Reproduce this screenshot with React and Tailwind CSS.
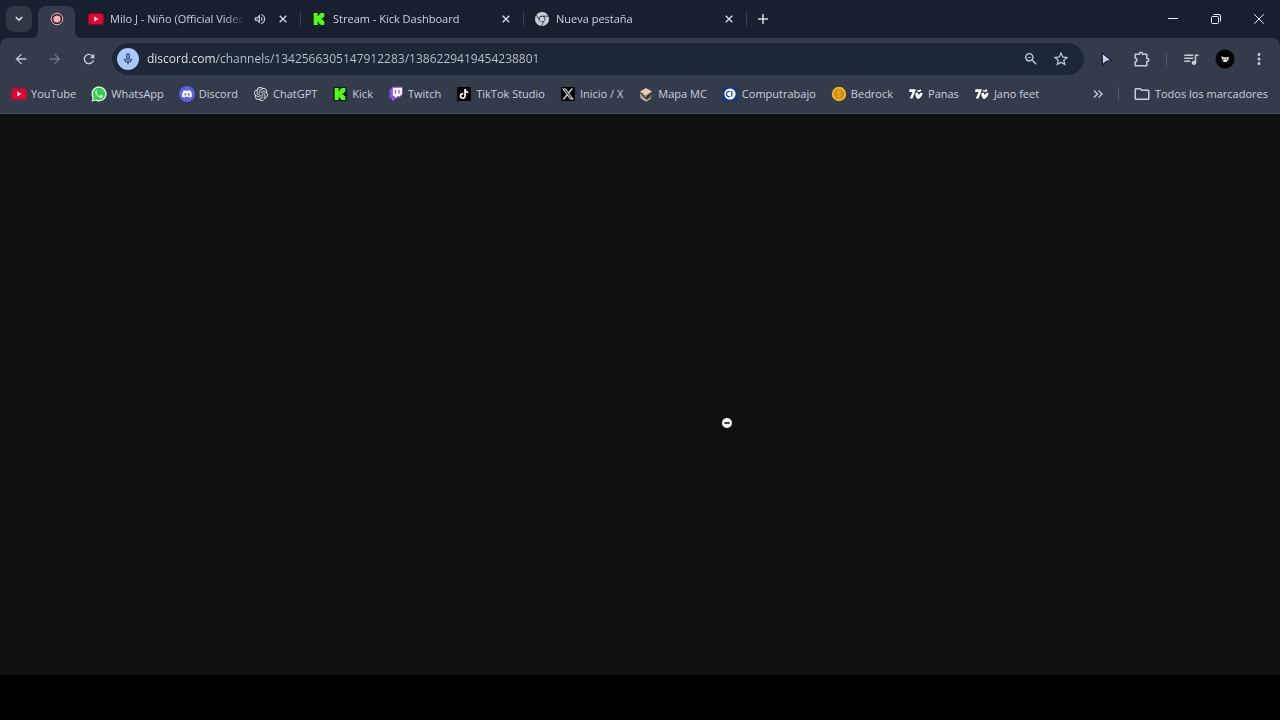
import React, { useState } from 'react';
import {
  MdArrowBack,
  MdArrowForward,
  MdRefresh,
  MdOutlineMicNone,
  MdOutlineZoomOut,
  MdStarBorder,
  MdQueueMusic,
  MdMoreVert,
  MdOutlineVolumeUp,
  MdOutlineFolder,
} from 'react-icons/md';
import { SiDiscord, SiGooglechrome, SiKick, SiOpenai, SiTiktok, SiX } from 'react-icons/si';

const YouTubeIcon = () => (
  <svg viewBox="0 0 16 16" className="size-4">
    <rect x="0.5" y="2.5" width="15" height="11" rx="2.6" fill="#e8002f" />
    <path d="M6.3 5.6v4.8L10.4 8z" fill="#fff" />
  </svg>
);

const WhatsAppIcon = () => (
  <svg viewBox="0 0 16 16" className="size-4">
    <path d="M0.6 15.6l1-3.9A7.5 7.5 0 1 1 4.5 14.5z" fill="#fff" />
    <path d="M2 14.2l.8-2.8A6.3 6.3 0 1 1 4.9 13.4z" fill="#2bd34f" />
    <path
      d="M5.6 4.3c-.3 0-.6.1-.8.4-.9 1-.7 2.3.2 3.6 1.1 1.6 2.4 2.7 4.2 3.3 1.1.3 2-.1 2.4-.9.2-.5.2-.9.1-1l-1.900-.9c-.2-.1-.4 0-.5.1l-.7.9c-.1.1-.3.2-.5.1-1.1-.5-1.900-1.200-2.500-2.200-.1-.2 0-.3.1-.4l.5-.7c.1-.1.1-.3 0-.4l-.7-1.700c-.1-.2-.2-.2-.4-.2z"
      fill="#fff"
    />
  </svg>
);

const DiscordIcon = () => (
  <span className="flex size-4 items-center justify-center rounded-full bg-[#5a60e0] text-white">
    <SiDiscord className="size-[10px]" />
  </span>
);

const KickIcon = () => (
  <span className="flex size-[14px] items-center justify-center rounded-xs bg-[#06200a] text-[#53fc18]">
    <SiKick className="size-3" />
  </span>
);

const TwitchIcon = () => (
  <svg viewBox="0 0 16 16" className="size-4">
    <path d="M4.500 1.500h9.500v6.700l-2.500 2.300H9L7 12.500v-2H4.500z" fill="#fff" />
    <path d="M7.500 4v3.500M11 4v3.500" stroke="#9146ff" strokeWidth="1.300" />
    <path d="M1.500 4L4.500 1v9.500H7V12.500L5 15H4v-2.500H1.500z" fill="#9146ff" />
    <path d="M4.500 1h10v7.500L11 12H8.500L6.500 13.500" fill="none" stroke="#9146ff" strokeWidth="0.800" />
  </svg>
);

const TikTokIcon = () => (
  <span className="flex size-[14px] items-center justify-center bg-black text-white">
    <SiTiktok className="size-[10px]" />
  </span>
);

const XIcon = () => (
  <span className="flex size-[14px] items-center justify-center bg-black text-[#d5d5d5]">
    <SiX className="size-3" />
  </span>
);

const MapIcon = () => (
  <svg viewBox="0 0 16 16" className="size-4">
    <path d="M2 5.500L8 9v6L2 11.500z" fill="#a29a8c" />
    <path d="M14 5.500L8 9v6l6-3.500z" fill="#5e574c" />
    <path d="M2 5.500L8 2l6 3.500L8 9.500z" fill="#f0cbb0" />
    <path d="M2 6.500l2 1.200v1l2 1V11l2 1.200 2-1V10l2-1.200V7.700l2-1.200" fill="none" stroke="#25231f" />
    <path d="M3 12l5 3 5-3" fill="none" stroke="#d8d6d0" />
  </svg>
);

const ComputrabajoIcon = () => (
  <svg viewBox="0 0 16 16" className="size-4">
    <rect x="1" y="1" width="14" height="14" rx="1" fill="#0b3a8f" />
    <circle cx="8" cy="8" r="5.600" fill="#fff" />
    <path d="M8.200 5.500a2.700 2.700 0 1 0 0 5M9.800 5v5.500" fill="none" stroke="#1b4a9c" strokeWidth="1.300" />
  </svg>
);

const BedrockIcon = () => (
  <svg viewBox="0 0 16 16" className="size-4">
    <circle cx="8" cy="8" r="7.200" fill="#f0b62c" />
    <circle cx="8" cy="8" r="5.200" fill="#cf8d08" />
    <path
      d="M10 6.200C9.500 5.300 6.200 5 6.200 6.700c0 1.600 3.700.9 3.700 2.600 0 1.700-3.400 1.500-3.900.4M8 4.200v7.600"
      fill="none"
      stroke="#f0b62c"
      strokeWidth="0.800"
    />
  </svg>
);

const SevenTvIcon = () => (
  <svg viewBox="0 0 16 16" className="size-4">
    <path d="M1.500 3.200h6.200L7.200 5.600 4.500 12.500H1.800L4.600 6H1z" fill="#fff" />
    <path d="M7.700 6.800h2l.9 2.200 2-2.300 1.900.3c.1 1.500-.7 3-1.800 4.100L11.200 12.800H9L7.300 9z" fill="#fff" />
    <path d="M8.700 3.700l1.800.9 2-1.300 1 1.400-2.200 1.300-1.900-.4z" fill="#fff" />
  </svg>
);

const ChatGptIcon = () => <SiOpenai className="size-[14px] text-[#d5d9e0]" />;
const ChromeIcon = () => <SiGooglechrome className="size-[14px] text-[#c8ccd4]" />;

const CrossIcon = () => (
  <svg viewBox="0 0 8 8" className="size-2">
    <path d="M0.700 0.700l6.600 6.600M7.300 0.700L0.700 7.300" stroke="currentColor" strokeWidth="1.400" />
  </svg>
);

const tabs = [
  { title: 'Milo J - Niño (Official Video)', Icon: YouTubeIcon, audio: true },
  { title: 'Stream - Kick Dashboard', Icon: KickIcon },
  { title: 'Nueva pestaña', Icon: ChromeIcon },
];

const bookmarks = [
  { name: 'YouTube', Icon: YouTubeIcon },
  { name: 'WhatsApp', Icon: WhatsAppIcon },
  { name: 'Discord', Icon: DiscordIcon },
  { name: 'ChatGPT', Icon: ChatGptIcon },
  { name: 'Kick', Icon: KickIcon },
  { name: 'Twitch', Icon: TwitchIcon },
  { name: 'TikTok Studio', Icon: TikTokIcon },
  { name: 'Inicio / X', Icon: XIcon },
  { name: 'Mapa MC', Icon: MapIcon },
  { name: 'Computrabajo', Icon: ComputrabajoIcon },
  { name: 'Bedrock', Icon: BedrockIcon },
  { name: 'Panas', Icon: SevenTvIcon },
  { name: 'Jano feet', Icon: SevenTvIcon },
];

const Tab = ({ title, Icon, audio }) => (
  <div className="flex h-full w-[223px] min-w-0 items-center pl-[10px]">
    <span className="flex size-4 shrink-0 items-center justify-center">
      <Icon />
    </span>
    <span className="ml-[6px] min-w-0 flex-1 overflow-hidden whitespace-nowrap text-[11px] leading-4 text-[#ccd2dc] [mask-image:linear-gradient(to_right,black_85%,transparent)]">
      {title}
    </span>
    {audio && <MdOutlineVolumeUp className="ml-2 size-[14px] shrink-0 text-[#c3c9d3]" />}
    <button aria-label="Cerrar pestaña" className="ml-1 flex size-6 shrink-0 items-center justify-center text-[#d3d7df]">
      <CrossIcon />
    </button>
    <span className="ml-[5px] h-[14px] w-px shrink-0 bg-[#394252]"></span>
  </div>
);

const TabStrip = () => (
  <div className="flex h-[38px] items-center">
    <button
      aria-label="Buscar pestañas"
      className="ml-[6px] flex size-[26px] shrink-0 items-center justify-center rounded-lg bg-[#303846] text-[#e3e6eb]"
    >
      <svg viewBox="0 0 8 6" className="h-[6px] w-2">
        <path d="M0.800 1l3.200 3.200L7.200 1" fill="none" stroke="currentColor" strokeWidth="1.500" />
      </svg>
    </button>

    {/* Active tab with its flared feet */}
    <div className="flex h-full shrink-0 items-end text-[#343c4b]">
      <svg viewBox="0 0 6 6" className="size-[6px]">
        <path d="M6 0v6H0a6 6 0 0 0 6-6z" fill="currentColor" />
      </svg>
      <div className="flex h-8 w-[37px] items-center justify-center rounded-t-lg bg-[#343c4b] pb-[6px]">
        <svg viewBox="0 0 14 14" className="size-[14px]">
          <circle cx="7" cy="7" r="5.800" fill="#40232f" stroke="#e9b4b8" />
          <circle cx="7" cy="7" r="3.600" fill="#f5b4b4" />
        </svg>
      </div>
      <svg viewBox="0 0 6 6" className="size-[6px]">
        <path d="M0 0v6h6a6 6 0 0 1-6-6z" fill="currentColor" />
      </svg>
    </div>

    <div className="-ml-[3px] flex h-full min-w-0">
      {tabs.map((tab) => (
        <Tab key={tab.title} {...tab} />
      ))}
    </div>
    <button aria-label="Nueva pestaña" className="ml-1 flex size-6 shrink-0 items-center justify-center text-[#d3d7df]">
      <svg viewBox="0 0 10 10" className="size-[10px]">
        <path d="M5 0v10M0 5h10" stroke="currentColor" strokeWidth="1.500" />
      </svg>
    </button>

    {/* Window controls */}
    <div className="ml-auto flex h-full text-[#eef0f3]">
      <button aria-label="Minimizar" className="flex h-full w-[43px] items-center justify-center">
        <svg viewBox="0 0 10 10" className="size-[10px]">
          <path d="M0 4.500h10" stroke="currentColor" />
        </svg>
      </button>
      <button aria-label="Restaurar" className="flex h-full w-[43px] items-center justify-center">
        <svg viewBox="0 0 10 10" className="size-[10px]" fill="none" stroke="currentColor">
          <rect x="0.500" y="2.500" width="7" height="7" rx="1" />
          <path d="M2.500 0.500H8a1.500 1.500 0 0 1 1.500 1.500v5.500" />
        </svg>
      </button>
      <button aria-label="Cerrar" className="flex h-full w-[43px] items-center justify-center">
        <svg viewBox="0 0 10 10" className="size-[10px]">
          <path d="M0.300 0.300l9.400 9.400M9.700 0.300L0.300 9.700" stroke="currentColor" />
        </svg>
      </button>
    </div>
  </div>
);

const Toolbar = () => {
  const [url, setUrl] = useState('discord.com/channels/1342566305147912283/1386229419454238801');

  return (
    <div className="flex h-[42px] items-center pl-1 text-[#c5ccd8]">
      <button aria-label="Atrás" className="flex h-8 w-[34px] items-center justify-center">
        <MdArrowBack className="size-4" />
      </button>
      <button aria-label="Adelante" className="flex h-8 w-[34px] items-center justify-center text-[#707888]">
        <MdArrowForward className="size-4" />
      </button>
      <button aria-label="Recargar" className="flex h-8 w-[34px] items-center justify-center">
        <MdRefresh className="size-4" />
      </button>

      <div className="ml-[6px] flex h-8 min-w-0 flex-1 items-center rounded-full bg-[#1e2735] pl-[5px]">
        <button
          aria-label="Micrófono en uso"
          className="flex size-[22px] shrink-0 items-center justify-center rounded-full bg-[#a8c7fa] text-[#1c3d6e]"
        >
          <MdOutlineMicNone className="size-[14px]" />
        </button>
        {/* The domain is brighter than the rest of the address */}
        <input
          type="text"
          aria-label="Dirección"
          value={url}
          onChange={(e) => setUrl(e.target.value)}
          className="ml-2 min-w-0 flex-1 bg-linear-to-r from-[#eceff3] from-[68px] to-[#c0c6d0] to-[68px] bg-clip-text text-[12px] leading-5 text-transparent outline-none"
        />
        <button aria-label="Zoom" className="flex size-[30px] items-center justify-center">
          <MdOutlineZoomOut className="size-4" />
        </button>
        <button aria-label="Añadir a marcadores" className="mr-2 flex size-[30px] items-center justify-center">
          <MdStarBorder className="size-[18px]" />
        </button>
      </div>

      <button aria-label="Extensión" className="ml-2 flex h-8 w-7 items-center justify-center">
        <svg viewBox="0 0 12 14" className="h-[14px] w-3">
          <path d="M2 0.800l9.500 7.700-5 .7L2.500 13z" fill="#c3d4f2" stroke="#151b27" strokeWidth="1.200" />
        </svg>
      </button>
      <button aria-label="Extensiones" className="ml-2 flex h-8 w-7 items-center justify-center">
        <svg viewBox="0 0 16 16" className="size-4">
          <path
            d="M1.200 3.200h4.300V2.700a1.500 1.500 0 0 1 3 0v.5h4.300v4.300h.5a1.500 1.500 0 0 1 0 3h-.5v4.300H1.200v-4.100a1.700 1.700 0 0 0 0-3.400z"
            fill="none"
            stroke="currentColor"
            strokeWidth="1.500"
            strokeLinejoin="round"
          />
        </svg>
      </button>
      <span className="mx-[10px] h-[14px] w-px bg-[#4e5767]"></span>
      <button aria-label="Controles multimedia" className="flex h-8 w-7 items-center justify-center">
        <MdQueueMusic className="size-[18px]" />
      </button>
      <button aria-label="Perfil" className="ml-[6px] flex h-8 w-7 items-center justify-center">
        <svg viewBox="0 0 20 20" className="size-5">
          <circle cx="10" cy="10" r="9.500" fill="#000" />
          <path d="M6.200 7.200l2 .8 3 .4 2.500-.6-.3 3-2.200 2.200H8.800L7.300 10.500z" fill="#f2eee0" />
          <path d="M8 10l1.500.3M10.800 10.500l1.200-.5" stroke="#000" strokeWidth="0.900" />
        </svg>
      </button>
      <button aria-label="Menú" className="mr-[7px] ml-[6px] flex h-8 w-7 items-center justify-center">
        <MdMoreVert className="size-[18px]" />
      </button>
    </div>
  );
};

const BookmarksBar = () => (
  <div className="flex h-[34px] items-center border-b border-[#474b5a] pb-[6px] pl-[11px] text-[11px] leading-4 text-[#c9cfda]">
    <nav className="flex min-w-0 gap-[15px] overflow-hidden">
      {bookmarks.map(({ name, Icon }) => (
        <a key={name} href="#" className="flex shrink-0 items-center gap-1 whitespace-nowrap">
          <span className="flex size-4 items-center justify-center">
            <Icon />
          </span>
          {name}
        </a>
      ))}
    </nav>
    <button aria-label="Más marcadores" className="ml-auto flex size-6 shrink-0 items-center justify-center">
      <svg viewBox="0 0 10 8" className="h-2 w-[10px]">
        <path d="M1 0.500L4.500 4 1 7.500M5.500 0.500L9 4 5.500 7.500" fill="none" stroke="currentColor" strokeWidth="1.300" />
      </svg>
    </button>
    <span className="mr-[14px] ml-2 h-[14px] w-px shrink-0 bg-[#4e5767]"></span>
    <a href="#" className="mr-3 flex shrink-0 items-center gap-1 whitespace-nowrap">
      <MdOutlineFolder className="size-[18px]" />
      Todos los marcadores
    </a>
  </div>
);

export default function App() {
  return (
    <div className="flex min-h-screen flex-col bg-black font-['Open_Sans','Noto_Sans',sans-serif]">
      <header className="bg-[#18202f]">
        <TabStrip />
        <div className="rounded-t-lg bg-[#343c4b]">
          <Toolbar />
          <BookmarksBar />
        </div>
      </header>

      <main className="relative flex-1 bg-[#101010]">
        <svg viewBox="0 0 10 10" className="absolute top-[304px] left-[722px] size-[10px]">
          <circle cx="5" cy="5" r="5" fill="#fff" />
          <path d="M2.300 5h5.400" stroke="#000" strokeWidth="1.500" />
        </svg>
      </main>
      <footer className="h-[45px] bg-black"></footer>
    </div>
  );
}
